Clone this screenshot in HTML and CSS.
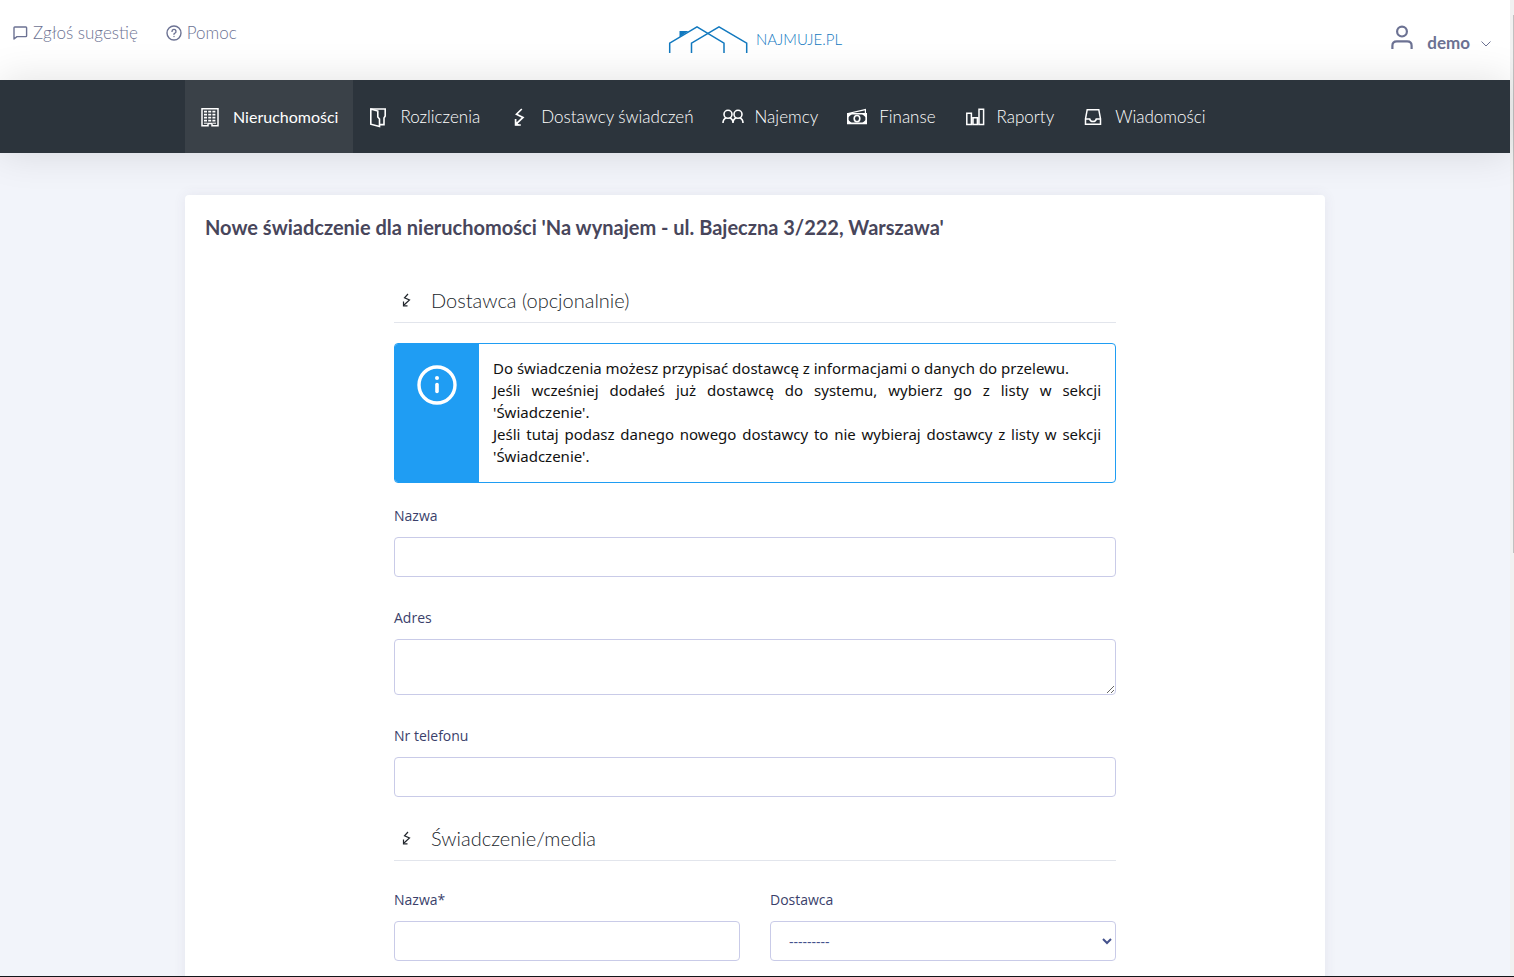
FILE: index.html
```html
<!DOCTYPE html>
<html lang="pl">
<head>
<meta charset="utf-8">
<meta name="viewport" content="width=device-width, initial-scale=1">
<title>Najmuje.pl</title>
<link rel="stylesheet" href="styles.css">
</head>
<body>
<div class="app">
  <div class="page">
    <header class="topbar">
      <div class="topbar-links">
        <a class="topbar-link" href="#">
          <svg width="16" height="16" viewBox="0 0 16 16" fill="none" stroke="currentColor" stroke-width="1.4" stroke-linejoin="round"><path d="M2.8 2h11q.8 0 .8.8v8q0 .8-.8.8H5L2 14V2.800q0-.8.8-.8z"/></svg>
          <span>Zgłoś sugestię</span>
        </a>
        <a class="topbar-link" href="#">
          <svg width="16" height="16" viewBox="0 0 16 16" fill="none" stroke="currentColor" stroke-width="1.4" stroke-linecap="round"><circle cx="8" cy="8" r="7"/><path d="M6 6.4a2 2 0 1 1 2.6 1.9q-.6.2-.6 1"/><path d="M8 11.4v.1"/></svg>
          <span>Pomoc</span>
        </a>
      </div>
      <a class="logo" href="#">
        <svg width="80" height="30" viewBox="0 0 80 30" fill="none" stroke="#1279bf" stroke-width="1.5"><path d="M1.7 28V18.2L29 1.8l27 16.4V28"/><path d="M23.5 28V18.2L51 1.8l27.7 16.4V28"/><path d="M11.500 6h9l-9 6z" fill="#1279bf" stroke="none"/></svg>
        <span class="logo-text">NAJMUJE.PL</span>
      </a>
      <button class="user" type="button">
        <svg width="24" height="26" viewBox="0 0 24 26" fill="none" stroke="currentColor" stroke-width="2.2"><circle cx="12" cy="6.600" r="4.900"/><path d="M2.400 24v-3.200q0-4.400 4.400-4.400h10.400q4.400 0 4.400 4.400V24"/></svg>
        <span class="user-name">demo</span>
        <svg class="chevron" width="10" height="6" viewBox="0 0 10 6" fill="none" stroke="currentColor"><path d="M.5.5 5 5 9.500.5"/></svg>
      </button>
    </header>

    <nav class="nav">
      <div class="nav-inner">
        <a class="nav-item active" href="#">
          <svg width="22" height="22" viewBox="0 0 22 22" fill="none" stroke="currentColor"><path stroke-width="1.5" d="M3 2.700h16v17h-6v-2.200H9v2.200H3z"/><path stroke-width="1.6" stroke-dasharray="3 1.200" d="M5 5.600h12.200M5 8.600h12.200M5 11.600h12.200M5 14.600h12.200"/><path d="M5 17.200h3M14 17.200h3"/></svg>
          <span>Nieruchomości</span>
        </a>
        <a class="nav-item" href="#">
          <svg width="22" height="22" viewBox="0 0 22 22" fill="none" stroke="currentColor" stroke-width="1.600"><path d="M3.800 3v15.200l8.700 2.300V13L10.800 11V5z"/><path d="M3.800 3h14.400v7l-1.200 2v6.600h-4.500"/></svg>
          <span>Rozliczenia</span>
        </a>
        <a class="nav-item" href="#">
          <svg width="22" height="22" viewBox="0 0 22 22" fill="none" stroke="currentColor" stroke-width="1.700"><path d="M13.800 3 8.500 8.200l6.500 3.200-6.500 6.200"/><path d="M7.600 13v6h5.200"/><path d="M7.500 15v4.200h4z" fill="currentColor" stroke="none"/></svg>
          <span>Dostawcy świadczeń</span>
        </a>
        <a class="nav-item" href="#">
          <svg width="22" height="22" viewBox="0 0 22 22" fill="none" stroke="currentColor" stroke-width="1.600"><circle cx="6" cy="8.300" r="4"/><circle cx="16" cy="8.300" r="4"/><path d="M1 17q0-4 3.300-5M7.700 12q3.300 1 3.300 5 0-4 3.300-5M17.700 12q3.300 1 3.300 5"/></svg>
          <span>Najemcy</span>
        </a>
        <a class="nav-item" href="#">
          <svg width="22" height="22" viewBox="0 0 22 22" fill="none" stroke="currentColor" stroke-width="1.600"><path d="M1.800 7.800h18.400v9.600H1.800z"/><ellipse cx="11" cy="12.600" rx="2.800" ry="3.100"/><path d="M2 7.500 19.400 3.600v3.800" stroke-width="1.200"/><path d="M2 8h4L2 11.500zM20 8h-4l4 3.500zM2 17.200h4L2 13.700zM20 17.200h-4l4-3.500z" fill="currentColor" stroke="none"/></svg>
          <span>Finanse</span>
        </a>
        <a class="nav-item" href="#">
          <svg width="22" height="22" viewBox="0 0 22 22" fill="none" stroke="currentColor" stroke-width="1.500"><path d="M2.800 7.200h4.600v11.300H2.800zM9 11.700h4.400v6.800H9zM15 3.200h4.600v15.300H15z"/></svg>
          <span>Raporty</span>
        </a>
        <a class="nav-item" href="#">
          <svg width="22" height="22" viewBox="0 0 22 22" fill="none" stroke="currentColor" stroke-width="1.500"><path d="M5.200 3.700h11.600l1.700 9.200v5.400h-15v-5.400z"/><path d="M3.500 12.900h4.200q.4 2.700 3.300 2.700t3.300-2.700h4.200"/></svg>
          <span>Wiadomości</span>
        </a>
      </div>
    </nav>

    <main class="card">
      <h1 class="card-title">Nowe świadczenie dla nieruchomości 'Na wynajem - ul. Bajeczna 3/222, Warszawa'</h1>
      <form class="form">
        <h2 class="section-title">
          <svg width="12" height="14" viewBox="0 0 12 14" fill="none" stroke="currentColor" stroke-width="1.200"><path d="M7 1 3.500 4.800l5 2.200L3 12"/><path d="M2.500 8.500v4.300h4"/></svg>
          <span>Dostawca (opcjonalnie)</span>
        </h2>
        <div class="alert">
          <div class="alert-icon">
            <svg width="40" height="40" viewBox="0 0 40 40" fill="none" stroke="#fff"><circle cx="20" cy="20" r="18" stroke-width="3.400"/><path d="M20 19.500v7" stroke-width="3.600" stroke-linecap="round"/><circle cx="20" cy="13" r="2" fill="#fff" stroke="none"/></svg>
          </div>
          <div class="alert-text">Do świadczenia możesz przypisać dostawcę z informacjami o danych do przelewu.<br>Jeśli wcześniej dodałeś już dostawcę do systemu, wybierz go z listy w sekcji 'Świadczenie'.<br>Jeśli tutaj podasz danego nowego dostawcy to nie wybieraj dostawcy z listy w sekcji 'Świadczenie'.</div>
        </div>
        <div class="fields">
          <div class="field">
            <label for="supplier-name">Nazwa</label>
            <input class="control" id="supplier-name" type="text">
          </div>
          <div class="field">
            <label for="supplier-address">Adres</label>
            <textarea class="control" id="supplier-address"></textarea>
          </div>
          <div class="field">
            <label for="supplier-phone">Nr telefonu</label>
            <input class="control" id="supplier-phone" type="text">
          </div>
        </div>
        <h2 class="section-title">
          <svg width="12" height="14" viewBox="0 0 12 14" fill="none" stroke="currentColor" stroke-width="1.200"><path d="M7 1 3.500 4.800l5 2.200L3 12"/><path d="M2.500 8.500v4.300h4"/></svg>
          <span>Świadczenie/media</span>
        </h2>
        <div class="field-row">
          <div class="field">
            <label for="service-name">Nazwa*</label>
            <input class="control" id="service-name" type="text" required>
          </div>
          <div class="field">
            <label for="service-supplier">Dostawca</label>
            <select class="control" id="service-supplier"><option>---------</option></select>
          </div>
        </div>
      </form>
    </main>
  </div>
  <div class="scroll-track"><div class="scroll-thumb"></div></div>
</div>
</body>
</html>
```
FILE: styles.css
```css
* {
  box-sizing: border-box;
}

body {
  margin: 0;
  background: #f2f4fa;
  font-family: "Open Sans", "Noto Sans", sans-serif;
}

a {
  color: inherit;
  text-decoration: none;
}

.app {
  display: flex;
  height: 100vh;
  overflow: hidden;
  border-bottom: 1px solid #14151a;
}

.page {
  flex: 1;
  min-width: 0;
}

.scroll-track {
  width: 4px;
  padding: 15px 0 0 3px;
  background: #f1f1f1;
}

.scroll-thumb {
  height: 56%;
  background: #c1c1c1;
}

.topbar {
  display: grid;
  grid-template-columns: 1fr auto 1fr;
  height: 80px;
  background: #fff;
  color: #6c7293;
  font-family: Lato, sans-serif;
}

.topbar-links {
  display: flex;
  gap: 28px;
  align-items: flex-start;
  padding: 23px 12px;
}

.topbar-link {
  display: flex;
  gap: 5px;
  align-items: center;
  font-size: 17px;
  font-weight: 300;
  line-height: 20px;
}

.logo {
  display: flex;
  gap: 8px;
  align-items: center;
  color: #1279bf;
}

.logo-text {
  padding-bottom: 3px;
  font-size: 15px;
  font-weight: 300;
}

.user {
  display: flex;
  align-items: center;
  justify-self: end;
  padding: 0 19px 4px;
  border: 0;
  background: none;
  color: #6c7293;
  font-family: inherit;
}

.user-name {
  margin: 8px 11px 0 13px;
  font-size: 17px;
  font-weight: 700;
}

.chevron {
  margin-top: 12px;
}

.nav {
  position: relative;
  background: #2c343c;
  box-shadow: 0 0 40px rgba(0, 0, 0, 0.12);
}

.nav-inner {
  display: flex;
  max-width: 1140px;
  height: 73px;
  margin: 0 auto;
}

.nav-item {
  display: flex;
  gap: 11px;
  align-items: center;
  padding: 0 14px;
  color: #fff;
  font-family: Lato, sans-serif;
  font-size: 17px;
  font-weight: 300;
}

.nav-item.active {
  gap: 12px;
  padding-right: 15px;
  background: #3a4148;
  font-size: 16px;
  font-weight: 400;
}

.card {
  max-width: 1140px;
  margin: 42px auto 0;
  padding: 17px 20px 60px;
  border-radius: 4px;
  background: #fff;
  box-shadow: 0 0 13px rgba(82, 63, 105, 0.08);
}

.card-title {
  margin: 0 0 43px;
  color: #48465b;
  font-family: Lato, sans-serif;
  font-size: 20px;
  font-weight: 700;
  line-height: 30px;
}

.form {
  max-width: 722px;
  margin: 0 auto;
}

.section-title {
  display: flex;
  gap: 18px;
  align-items: center;
  margin: 0;
  padding: 0 0 7px 7px;
  border-bottom: 1px solid #e2e5ec;
  color: #21262c;
  font-family: Lato, sans-serif;
  font-size: 20px;
  font-weight: 300;
  line-height: 30px;
}

.alert {
  display: flex;
  margin-top: 20px;
  border: 1px solid #1f9df3;
  border-radius: 4px;
  overflow: hidden;
}

.alert-icon {
  flex: 0 0 84px;
  padding: 21px 0 0 22px;
  background: #1f9df3;
}

.alert-text {
  padding: 13px 14px 15px;
  color: #111;
  font-family: "Noto Sans", "Open Sans", sans-serif;
  font-size: 15px;
  line-height: 22px;
  text-align: justify;
}

.fields {
  display: grid;
  gap: 31px;
  margin: 23px 0 26px;
}

.field {
  display: grid;
  gap: 11px;
}

.field label {
  color: #3b3f6b;
  font-size: 14px;
  line-height: 20px;
}

.field-row {
  display: grid;
  grid-template-columns: 1fr 1fr;
  gap: 30px;
  margin-top: 29px;
}

.control {
  display: block;
  width: 100%;
  height: 40px;
  padding: 8px 14px;
  border: 1px solid #c9cbe8;
  border-radius: 4px;
  background: #fff;
  color: #44518c;
  font-family: inherit;
  font-size: 14px;
}

textarea.control {
  height: 56px;
}

select.control {
  padding-right: 0;
}
```
